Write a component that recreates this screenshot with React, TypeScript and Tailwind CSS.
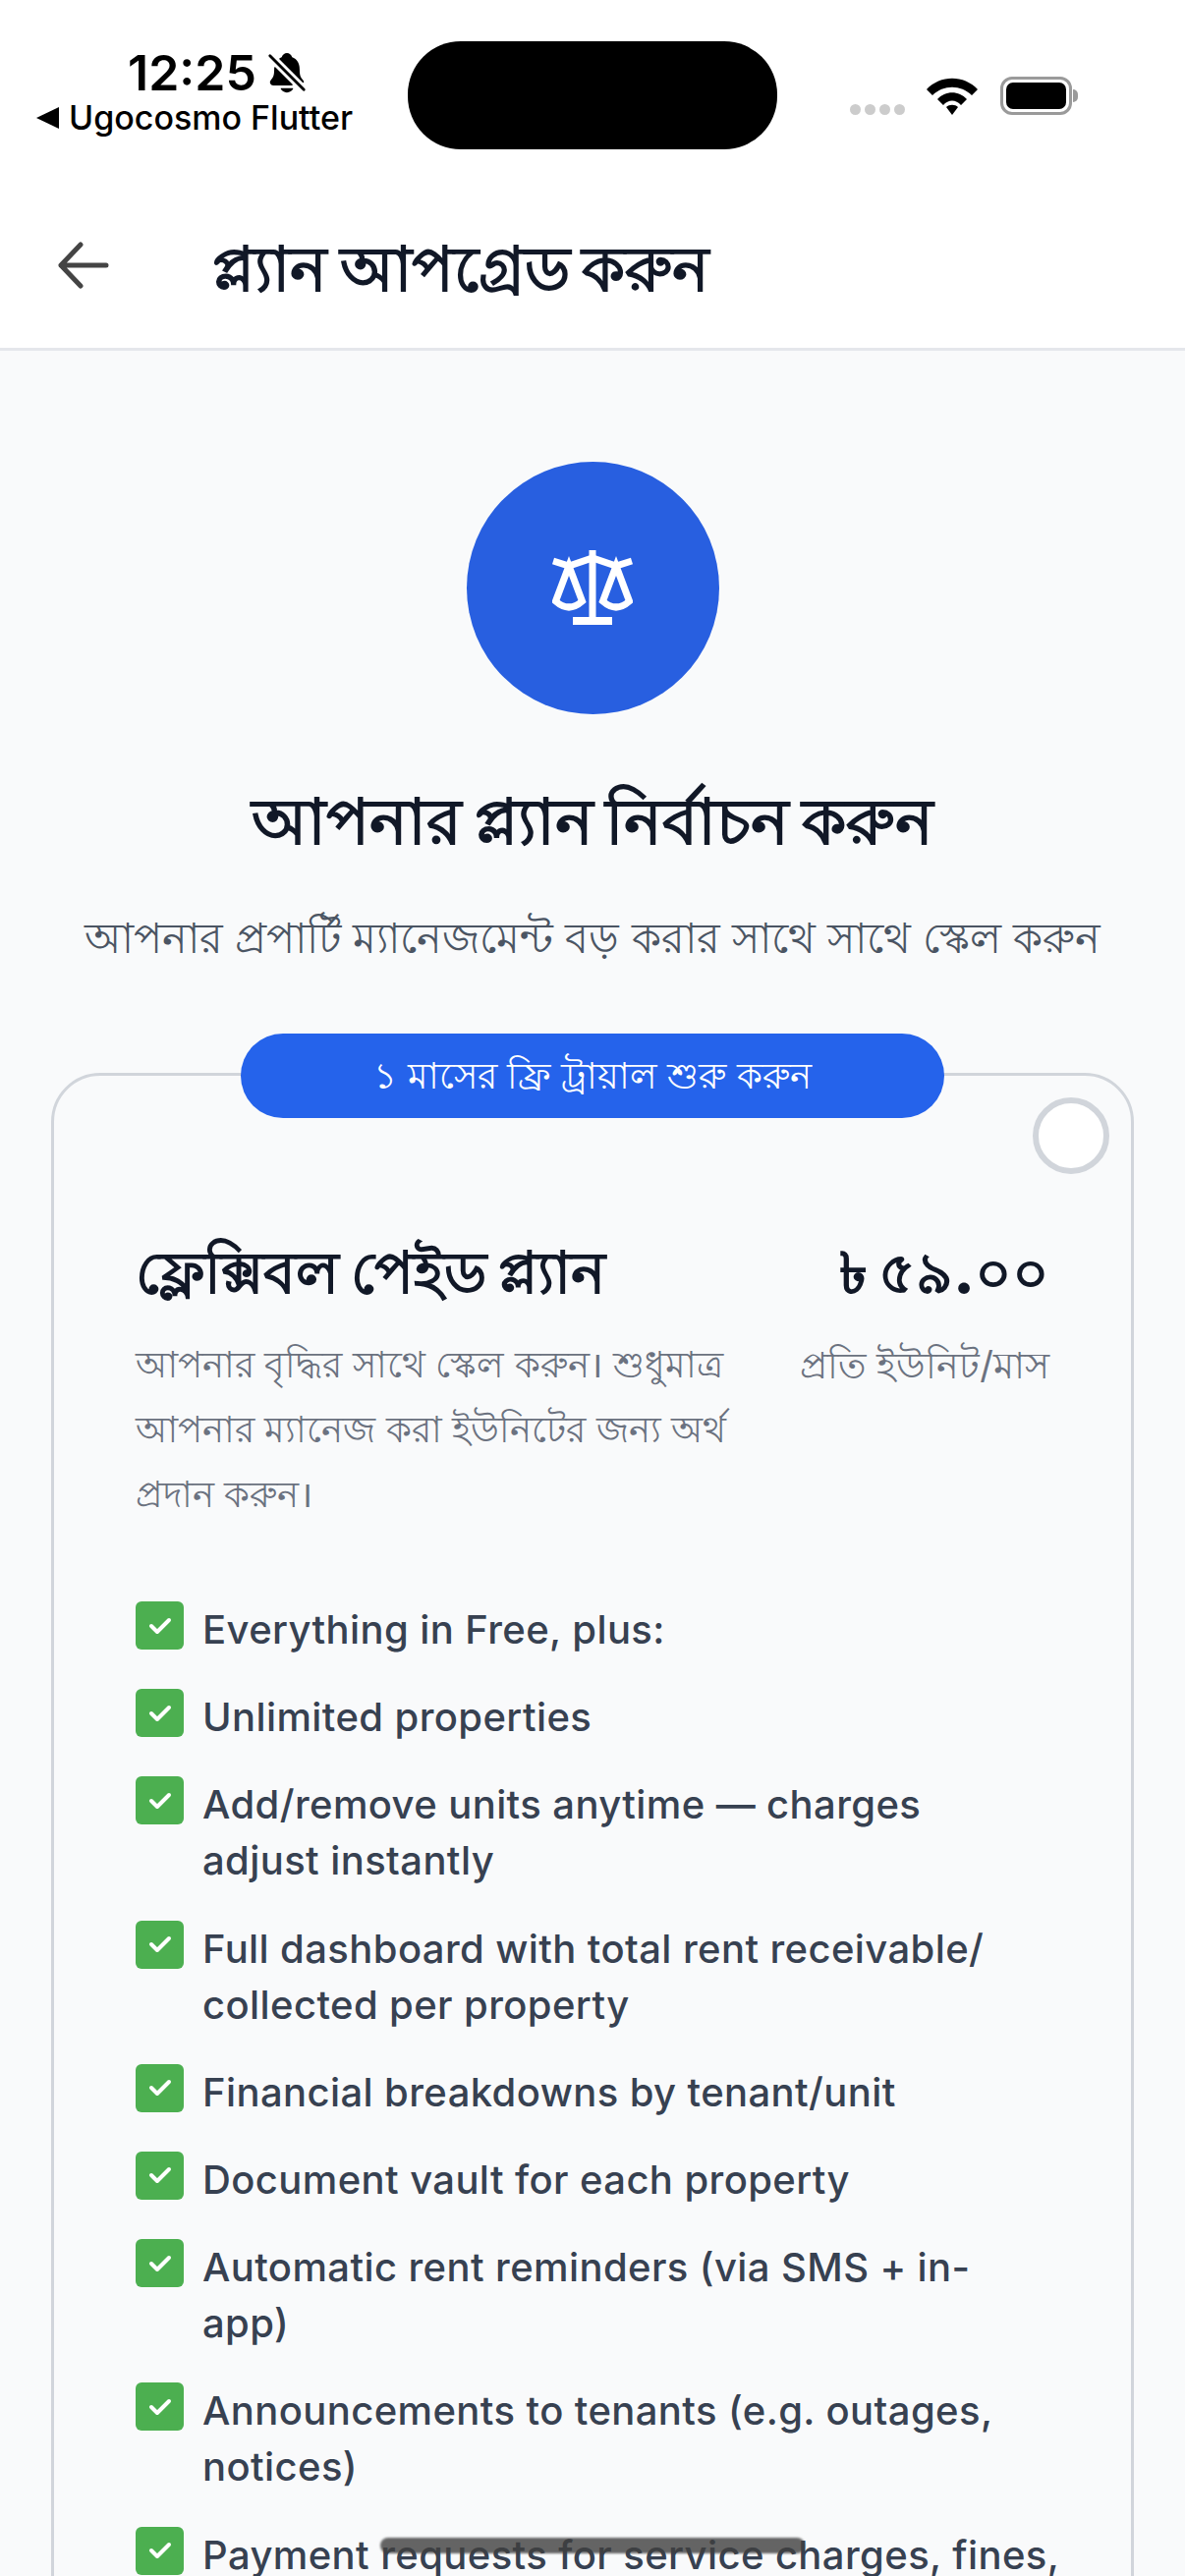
import React, { ReactElement } from 'react';
import { IoNotificationsOff } from 'react-icons/io5';

const FEATURES = [
  'Everything in Free, plus:',
  'Unlimited properties',
  'Add/remove units anytime — charges\nadjust instantly',
  'Full dashboard with total rent receivable/\ncollected per property',
  'Financial breakdowns by tenant/unit',
  'Document vault for each property',
  'Automatic rent reminders (via SMS + in-\napp)',
  'Announcements to tenants (e.g. outages,\nnotices)',
  'Payment requests for service charges, fines,',
];

export default function App(): ReactElement {
  return (
    <div className="relative h-[2622px] w-[1206px] overflow-hidden bg-[#f9fafb] font-['Inter','Noto_Sans','Noto_Sans_CJK_SC',sans-serif]">
      <div className="bg-white border-b-[3px] border-[#e5e7eb] h-[357px]">
        <StatusBar />
        <div className="flex items-center h-[146px] pl-[56px]">
          <BackArrow />
          <h1 className="ml-[100px] text-[63px] font-black leading-none text-[#111827]">
            প্ল্যান আপগ্রেড করুন
          </h1>
        </div>
      </div>

      <div className="flex flex-col items-center pt-[113px]">
        <div className="flex h-[257px] w-[257px] items-center justify-center rounded-full bg-[#285fe0]">
          <ScaleIcon />
        </div>
        <h2 className="mt-[69px] text-[65px] font-black leading-[80px] text-[#111827]">
          আপনার প্ল্যান নির্বাচন করুন
        </h2>
        <p className="mt-[48px] text-[43px] leading-[60px] text-[#4b5563]">
          আপনার প্রপার্টি ম্যানেজমেন্ট বড় করার সাথে সাথে স্কেল করুন
        </p>
      </div>

      <div className="relative mx-[52px] mt-[108px] h-[1600px] rounded-[50px] border-[3px] border-[#d1d5db] px-[83px] pt-[160px]">
        <div className="absolute left-[190px] top-[-43px] flex h-[86px] w-[716px] items-center justify-center rounded-full bg-[#2563eb] text-[37px] text-white">
          ১ মাসের ফ্রি ট্রায়াল শুরু করুন
        </div>
        <div className="absolute right-[22px] top-[22px] h-[78px] w-[78px] rounded-full border-[6px] border-[#d1d5db] bg-white" />

        <div className="flex justify-between">
          <div className="w-[620px]">
            <div className="text-[59px] font-black leading-[80px] text-[#111827]">
              ফ্লেক্সিবল পেইড প্ল্যান
            </div>
            <p className="mt-[21px] text-[37px] leading-[66px] text-[#6b7280]">
              আপনার বৃদ্ধির সাথে স্কেল করুন। শুধুমাত্র আপনার ম্যানেজ করা ইউনিটের জন্য অর্থ প্রদান করুন।
            </p>
          </div>
          <div className="flex flex-col items-end">
            <div className="text-[58px] font-black leading-[80px] text-[#111827]">৳ ৫৯.০০</div>
            <div className="mt-[21px] text-[38px] leading-[66px] text-[#6b7280]">প্রতি ইউনিট/মাস</div>
          </div>
        </div>

        <ul className="mt-[76px] flex flex-col gap-[32.2px]">
          {FEATURES.map((feature) => (
            <li key={feature} className="flex items-start gap-[19px]">
              <CheckBox />
              <span className="whitespace-pre text-[40px] font-[450] leading-[57px] tracking-[0.4px] text-[#374151]">{feature}</span>
            </li>
          ))}
        </ul>
      </div>

      <div className="absolute left-[387px] top-[2583px] h-[16px] w-[432px] rounded-full bg-[#3f3f3f] opacity-80 blur-[1px]" />
    </div>
  );
}

function StatusBar(): ReactElement {
  return (
    <div className="flex h-[200px] items-start">
      <div className="w-[415px] pt-[46px]">
        <div className="flex items-center pl-[130px]">
          <span className="text-[50px] font-semibold leading-[56px] text-black">12:25</span>
          <IoNotificationsOff className="ml-[8px] text-black" size={46} />
        </div>
        <div className="flex items-center pl-[37px]">
          <svg width="23" height="22" viewBox="0 0 23 22" className="mr-[10px]">
            <path d="M0 11 L23 0 V22 Z" fill="black" />
          </svg>
          <span className="text-[34px] font-medium leading-[36px] text-black">Ugocosmo Flutter</span>
        </div>
      </div>
      <div className="mt-[42px] h-[110px] w-[376px] rounded-[54px] bg-black" />
      <div className="flex items-center pl-[74px] pt-[78px]">
        <div className="mt-[28px] flex gap-[4px]">
          <i className="h-[11px] w-[11px] rounded-full bg-[#cccccc]" />
          <i className="h-[11px] w-[11px] rounded-full bg-[#cccccc]" />
          <i className="h-[11px] w-[11px] rounded-full bg-[#cccccc]" />
          <i className="h-[11px] w-[11px] rounded-full bg-[#cccccc]" />
        </div>
        <svg width="52" height="38" viewBox="0 0 52 38" className="ml-[22px]">
          <path d="M0 12 C14 -3 38 -3 52 12 L46 18 C35 7 17 7 6 18 Z" fill="black" />
          <path d="M11 22 C19 13 33 13 41 22 L35 28 C30 22 22 22 17 28 Z" fill="black" />
          <path d="M20 30 C23 27 29 27 32 30 L26 38 Z" fill="black" />
        </svg>
        <div className="ml-[23px] flex h-[39px] w-[73px] items-center justify-center rounded-[12px] border-[3px] border-[#9a9a9a]">
          <div className="h-[27px] w-[61px] rounded-[7px] bg-black" />
        </div>
        <div className="ml-[1px] h-[13px] w-[5px] rounded-r-full bg-[#9a9a9a]" />
      </div>
    </div>
  );
}

function BackArrow(): ReactElement {
  return (
    <svg width="60" height="60" viewBox="0 0 60 60" fill="none" stroke="#444444" strokeWidth="5" strokeLinecap="round" strokeLinejoin="round" className="mt-[-6px]">
      <path d="M6 30 H52 M26 9 L6 30 L26 51" />
    </svg>
  );
}

function ScaleIcon(): ReactElement {
  return (
    <svg width="82" height="76" viewBox="0 0 82 76" fill="none" stroke="white" strokeWidth="7" className="mt-[-1px]">
      <path d="M41 0 V70" />
      <path d="M21 72 H61" strokeWidth="8" />
      <path d="M1 11 L17 16 L41 8 L65 16 L81 11" />
      <path d="M17 16 L3.5 52 Q17 64 30.5 52 Z" />
      <path d="M65 16 L51.5 52 Q65 64 78.5 52 Z" />
    </svg>
  );
}

function CheckBox(): ReactElement {
  return (
    <div className="flex h-[49px] w-[49px] shrink-0 items-center justify-center rounded-[6px] bg-[#4caf50]">
      <svg width="28" height="24" viewBox="0 0 28 24" fill="none" stroke="white" strokeWidth="4" strokeLinecap="round" strokeLinejoin="round">
        <path d="M5 12 L11 18 L23 6" />
      </svg>
    </div>
  );
}
